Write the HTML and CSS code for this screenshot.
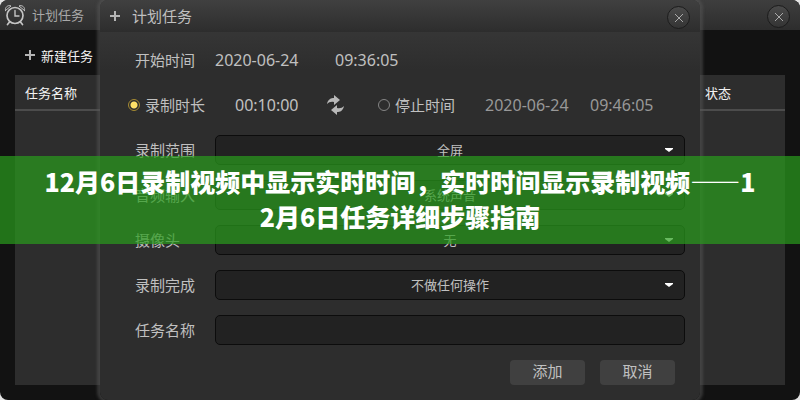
FILE: index.html
```
<!DOCTYPE html>
<html lang="zh-CN">
<head>
  <meta charset="UTF-8">
  <meta name="viewport" content="width=device-width, initial-scale=1.0">
  <title>计划任务</title>
  <link rel="stylesheet" href="styles.css">
</head>
<body>
  <div class="stage">

    <!-- Task list window -->
    <div class="window">
      <div class="window-bar">
        <svg class="clock-icon" viewBox="0 0 22 22" width="22" height="22">
          <g fill="none" stroke="#c4c4c4" stroke-linecap="round">
            <circle cx="11" cy="11.500" r="8" stroke-width="1.700"/>
            <path d="M11 6.500v5.500h4" stroke-width="1.400"/>
            <path d="M1.500 6.500C.5 3.500 4 .5 7 2L1.500 6.500zM20.500 6.500c1-3-2.500-6-5.500-4.500l5.500 4.500z" stroke-width="1" stroke-linejoin="round"/>
            <path d="M5.500 18L3.500 20.500M16.500 18l2 2.500" stroke-width="1.700"/>
          </g>
        </svg>
        <span class="window-title">计划任务</span>
        <button type="button" class="close-button" aria-label="关闭">
          <svg viewBox="0 0 10 10" width="10" height="10"><path d="M1 1l8 8M9 1L1 9" stroke="#aaa"/></svg>
        </button>
      </div>
      <button type="button" class="new-task">
        <svg viewBox="0 0 10 10" width="10" height="10"><path d="M5 0v10M0 5h10" stroke="#b5b5b5" stroke-width="2"/></svg>
        新建任务
      </button>
      <div class="task-list">
        <table class="task-table">
          <thead>
            <tr>
              <th>任务名称</th>
              <th class="status-column">状态</th>
            </tr>
          </thead>
        </table>
      </div>
    </div>

    <!-- New task dialog -->
    <div class="task-dialog">
      <div class="dialog-bar">
        <svg viewBox="0 0 10 10" width="10" height="10"><path d="M5 0v10M0 5h10" stroke="#b5b5b5" stroke-width="2"/></svg>
        <span class="dialog-title">计划任务</span>
        <button type="button" class="close-button" aria-label="关闭">
          <svg viewBox="0 0 10 10" width="10" height="10"><path d="M1 1l8 8M9 1L1 9" stroke="#aaa"/></svg>
        </button>
      </div>

      <form class="task-form">
        <div class="form-row">
          <label for="start-date">开始时间</label>
          <div class="start-time">
            <input type="text" id="start-date" class="date-input" value="2020-06-24">
            <input type="text" class="time-input" aria-label="开始时间" value="09:36:05">
          </div>
        </div>

        <div class="time-row">
          <input type="radio" name="mode" id="mode-length" checked>
          <label for="mode-length">录制时长</label>
          <input type="text" class="time-input" aria-label="录制时长" value="00:10:00">
          <svg class="swap-icon" viewBox="0 0 20 20" width="20" height="20" fill="#b8b8b8">
            <path d="M2 9C3 4 6 3 9 3V0l6 5-6 5V7C6 6.500 4 7 2 9z"/>
            <path d="M19 11c-1 5-4 6-7 6v3l-6-5 6-5v3c3 .5 5 0 7-2z"/>
          </svg>
          <div class="stop-time">
            <input type="radio" name="mode" id="mode-stop">
            <label for="mode-stop">停止时间</label>
            <input type="text" class="date-input" aria-label="停止日期" value="2020-06-24">
            <input type="text" class="time-input" aria-label="停止时间" value="09:46:05">
          </div>
        </div>

        <div class="form-row">
          <label for="area">录制范围</label>
          <div class="select-box">
            <select id="area"><option>全屏</option></select>
          </div>
        </div>

        <div class="form-row">
          <label for="audio">音频输入</label>
          <div class="select-box">
            <select id="audio"><option>系统声音</option></select>
          </div>
        </div>

        <div class="form-row">
          <label for="camera">摄像头</label>
          <div class="select-box">
            <select id="camera"><option>无</option></select>
          </div>
        </div>

        <div class="form-row">
          <label for="finish">录制完成</label>
          <div class="select-box">
            <select id="finish"><option>不做任何操作</option></select>
          </div>
        </div>

        <div class="form-row">
          <label for="task-name">任务名称</label>
          <input type="text" id="task-name" class="name-input">
        </div>

        <div class="form-buttons">
          <button type="button">添加</button>
          <button type="button">取消</button>
        </div>
      </form>
    </div>

    <!-- Headline -->
    <h1 class="banner">12月6日录制视频中显示实时时间，实时时间显示录制视频——12月6日任务详细步骤指南</h1>
  </div>
</body>
</html>
```
FILE: styles.css
```
* {
  box-sizing: border-box;
}
body {
  margin: 0;
  background-color: #e4e4e4;
  font-family: "Noto Sans", "Noto Sans CJK SC", sans-serif;
  color: #c0c0c0;
}
button, input, select {
  font-family: inherit;
  color: inherit;
  margin: 0;
  padding: 0;
  border: none;
  background: none;
}
svg {
  display: block;
  flex: none;
}

/* the window, the dialog and the banner share one cell */
.stage {
  display: grid;
  min-height: 100vh;
}
.window, .task-dialog, .banner {
  grid-area: 1 / 1;
}

.window {
  display: flex;
  flex-direction: column;
  background-color: #121212;
  border-radius: 8px;
  overflow: hidden;
}
.window-bar {
  display: flex;
  align-items: center;
  gap: 6px;
  height: 30px;
  padding: 0 10px 0 4px;
  background: linear-gradient(#3e3e3e, #2d2d2d);
}
.window-title {
  font-size: 13px;
  line-height: 20px;
  color: #a8a8a8;
}
.close-button {
  display: flex;
  align-items: center;
  justify-content: center;
  width: 23px;
  height: 23px;
  margin-left: auto;
  margin-top: 3px;
  border: 1px solid #1c1c1c;
  border-radius: 50%;
  background: linear-gradient(#4a4a4a, #343434);
}
.new-task {
  display: flex;
  align-items: center;
  align-self: flex-start;
  gap: 6px;
  height: 20px;
  margin: 15px 25px 10px;
  font-size: 13px;
  color: #f2f2f2;
}
.task-list {
  flex: 1;
  margin: 0 15px 15px;
  background-color: #2d2d2d;
}
.task-table {
  width: 100%;
  border-collapse: collapse;
}
.task-table th {
  height: 35px;
  padding: 0 10px;
  border-bottom: 2px solid #4c4c4c;
  font-size: 13px;
  font-weight: normal;
  text-align: left;
  color: #f2f2f2;
}
.task-table .status-column {
  width: 90px;
}

.task-dialog {
  justify-self: center;
  width: 75%;
  background: linear-gradient(#363636 30px, #2d2d2d 70px);
  border-radius: 8px;
  box-shadow: 0 0 3px 3px rgba(90, 90, 90, 0.5);
  clip-path: inset(0 -8px);
}
.dialog-bar {
  display: flex;
  align-items: center;
  gap: 12px;
  height: 32px;
  padding: 0 10px;
  border-radius: 8px 8px 0 0;
  background: linear-gradient(#404040, #2d2d2d);
}
.dialog-title {
  font-size: 15px;
  line-height: 20px;
}
.task-form {
  display: flex;
  flex-direction: column;
  gap: 15px;
  padding: 13px 15px 15px 35px;
  font-size: 15px;
}
.task-form label {
  padding-bottom: 2px;
}
.form-row {
  display: grid;
  grid-template-columns: 80px 1fr;
  align-items: center;
  height: 30px;
}
.start-time {
  display: flex;
  gap: 35px;
}
.date-input, .time-input {
  font-size: 16px;
  height: 24px;
}
.date-input {
  width: 85px;
}
.time-input {
  width: 70px;
}
.time-row {
  display: flex;
  align-items: center;
  height: 30px;
  margin-left: -7px;
}
.time-row label {
  margin: 0 30px 0 5px;
}
.swap-icon {
  margin: 0 33px 0 20px;
}
.stop-time {
  display: flex;
  align-items: center;
}
.stop-time .date-input {
  margin-right: 20px;
}
.stop-time input {
  color: #989898;
}
input[type="radio"] {
  appearance: none;
  width: 12px;
  height: 12px;
  border: 1px solid #858585;
  border-radius: 50%;
}
input[type="radio"]:checked {
  border-color: #a58a32;
  background: radial-gradient(#ffe268 3px, #2d2d2d 4px);
}
.select-box {
  position: relative;
}
.select-box::after {
  content: "";
  position: absolute;
  top: 13px;
  right: 12px;
  width: 8px;
  height: 4px;
  background-color: #fff;
  clip-path: polygon(0 0, 100% 0, 100% 25%, 50% 100%, 0 25%);
  pointer-events: none;
}
select, .name-input {
  display: block;
  width: 100%;
  height: 30px;
  border: 1px solid #0c0c0c;
  border-radius: 5px;
  background-color: #222;
}
select {
  appearance: none;
  font-size: 13px;
  text-align-last: center;
}
.name-input {
  padding: 0 10px;
  font-size: 15px;
}
.form-buttons {
  display: flex;
  justify-content: flex-end;
  gap: 15px;
  padding-right: 10px;
}
.form-buttons button {
  width: 75px;
  height: 25px;
  padding-bottom: 2px;
  border-radius: 4px;
  background-color: #404040;
  font-size: 15px;
  line-height: 23px;
}

.banner {
  position: relative;
  align-self: center;
  margin: 0;
  padding: 8px 42px 10px;
  background-color: rgba(41, 156, 28, 0.7);
  font-family: "Noto Sans CJK SC", sans-serif;
  font-size: 25px;
  font-weight: 900;
  line-height: 35px;
  text-align: center;
  word-break: break-all;
  color: #fff;
}
```
